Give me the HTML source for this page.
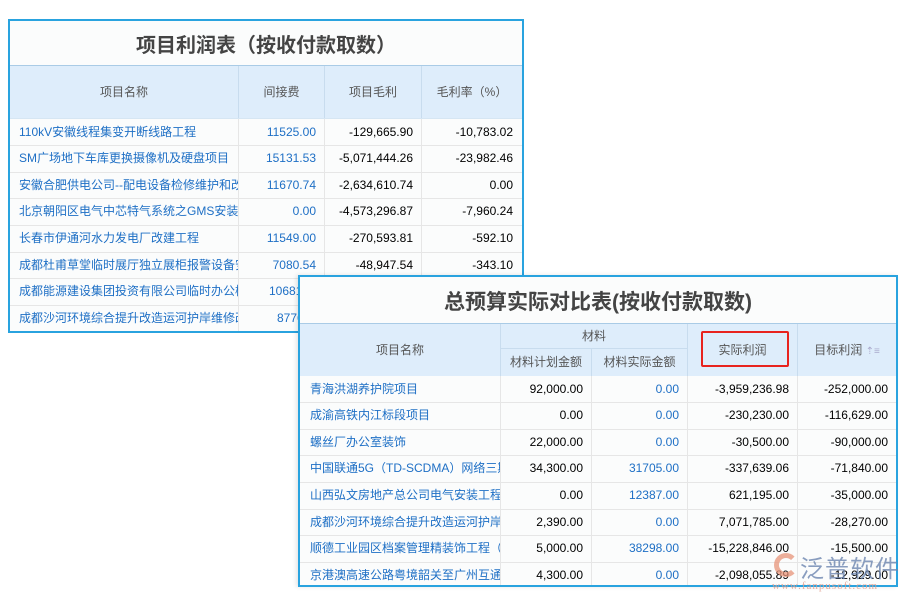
<!DOCTYPE html>
<html><head><meta charset="utf-8"><style>
*{margin:0;padding:0;box-sizing:border-box}
body{width:900px;height:600px;background:#fff;position:relative;overflow:hidden;font-family:"Liberation Sans","Noto Sans CJK SC",sans-serif;}
.t{position:absolute;background:#fbfcfc;border:2px solid #29a3df;overflow:hidden}
.ttl{position:absolute;left:0;right:0;text-align:center;font-weight:bold;color:#444;}
.c{position:absolute;font-size:12px;white-space:nowrap;overflow:hidden;line-height:26px}
.h{position:absolute;background:#deedfb;color:#555;font-size:12px;text-align:center;border-right:1px solid #c8dcee}
.l{color:#1e6fc5}
.r{text-align:right;padding-right:8px}
.hl{position:absolute;height:1px;background:#e6e6e6}
.vl{position:absolute;width:1px;background:#e6e6e6}
</style></head><body>

<div class="t" style="left:8px;top:19px;width:516px;height:314px">
<div class="ttl" style="top:8px;font-size:20px">项目利润表（按收付款取数）</div>
<div style="position:absolute;left:0;top:44px;width:512px;height:54px;background:#deedfb;border-top:1px solid #a9cbe6;border-bottom:1px solid #d6e6f3"></div>
<div class="h" style="left:0;top:45px;width:229px;height:52px;line-height:52px">项目名称</div>
<div class="h" style="left:229px;top:45px;width:86px;height:52px;line-height:52px">间接费</div>
<div class="h" style="left:315px;top:45px;width:97px;height:52px;line-height:52px">项目毛利</div>
<div class="h" style="left:412px;top:45px;width:100px;height:52px;line-height:52px;border:none">毛利率（%）</div>
<div class="vl" style="left:228px;top:98px;height:220px"></div>
<div class="vl" style="left:314px;top:98px;height:220px"></div>
<div class="vl" style="left:411px;top:98px;height:220px"></div>
<div class="hl" style="left:0;width:512px;top:124px"></div>
<div class="hl" style="left:0;width:512px;top:151px"></div>
<div class="hl" style="left:0;width:512px;top:177px"></div>
<div class="hl" style="left:0;width:512px;top:204px"></div>
<div class="hl" style="left:0;width:512px;top:231px"></div>
<div class="hl" style="left:0;width:512px;top:257px"></div>
<div class="hl" style="left:0;width:512px;top:284px"></div>

<div class="c l" style="left:9px;top:98px;width:219px">110kV安徽线程集变开断线路工程</div>
<div class="c l" style="left:9px;top:124px;width:219px">SM广场地下车库更换摄像机及硬盘项目</div>
<div class="c l" style="left:9px;top:151px;width:219px">安徽合肥供电公司--配电设备检修维护和改造</div>
<div class="c l" style="left:9px;top:177px;width:219px">北京朝阳区电气中芯特气系统之GMS安装工程</div>
<div class="c l" style="left:9px;top:204px;width:219px">长春市伊通河水力发电厂改建工程</div>
<div class="c l" style="left:9px;top:231px;width:219px">成都杜甫草堂临时展厅独立展柜报警设备安装</div>
<div class="c l" style="left:9px;top:257px;width:219px">成都能源建设集团投资有限公司临时办公楼</div>
<div class="c l" style="left:9px;top:284px;width:219px">成都沙河环境综合提升改造运河护岸维修改造</div>

<div class="c l r" style="left:228px;top:98px;width:86px">11525.00</div>
<div class="c l r" style="left:228px;top:124px;width:86px">15131.53</div>
<div class="c l r" style="left:228px;top:151px;width:86px">11670.74</div>
<div class="c l r" style="left:228px;top:177px;width:86px">0.00</div>
<div class="c l r" style="left:228px;top:204px;width:86px">11549.00</div>
<div class="c l r" style="left:228px;top:231px;width:86px">7080.54</div>
<div class="c l" style="left:259px;top:257px;width:60px">10681.00</div>
<div class="c l" style="left:267px;top:284px;width:60px">8776.00</div>

<div class="c r" style="left:314px;top:98px;width:97px">-129,665.90</div>
<div class="c r" style="left:314px;top:124px;width:97px">-5,071,444.26</div>
<div class="c r" style="left:314px;top:151px;width:97px">-2,634,610.74</div>
<div class="c r" style="left:314px;top:177px;width:97px">-4,573,296.87</div>
<div class="c r" style="left:314px;top:204px;width:97px">-270,593.81</div>
<div class="c r" style="left:314px;top:231px;width:97px">-48,947.54</div>
<div class="c r" style="left:411px;top:98px;width:100px">-10,783.02</div>
<div class="c r" style="left:411px;top:124px;width:100px">-23,982.46</div>
<div class="c r" style="left:411px;top:151px;width:100px">0.00</div>
<div class="c r" style="left:411px;top:177px;width:100px">-7,960.24</div>
<div class="c r" style="left:411px;top:204px;width:100px">-592.10</div>
<div class="c r" style="left:411px;top:231px;width:100px">-343.10</div>
</div>

<div class="t" style="left:298px;top:275px;width:600px;height:312px;box-shadow:-2px 0 4px rgba(0,0,0,.1)">
<div class="ttl" style="top:9px;font-size:21px">总预算实际对比表(按收付款取数)</div>
<div style="position:absolute;left:0;top:46px;width:596px;height:53px;background:#deedfb;border-top:1px solid #a9cbe6"></div>
<div class="h" style="left:0;top:47px;width:201px;height:52px;line-height:52px">项目名称</div>
<div class="h" style="left:201px;top:47px;width:187px;height:25px;line-height:25px;border-bottom:1px solid #c8dcee">材料</div>
<div class="h" style="left:201px;top:72px;width:91px;height:27px;line-height:27px">材料计划金额</div>
<div class="h" style="left:292px;top:72px;width:96px;height:27px;line-height:27px">材料实际金额</div>
<div class="h" style="left:388px;top:47px;width:110px;height:52px;line-height:52px">实际利润</div>
<div class="h" style="left:498px;top:47px;width:98px;height:52px;line-height:52px;border:none">目标利润 <span style="color:#aac;font-size:10px">⇡≡</span></div>
<div style="position:absolute;left:401px;top:54px;width:88px;height:36px;border:2px solid #e8231e;border-radius:2px"></div>
<div class="vl" style="left:200px;top:99px;height:220px"></div>
<div class="vl" style="left:291px;top:99px;height:220px"></div>
<div class="vl" style="left:387px;top:99px;height:220px"></div>
<div class="vl" style="left:497px;top:99px;height:220px"></div>
<div class="hl" style="left:0;width:596px;top:125px"></div>
<div class="hl" style="left:0;width:596px;top:152px"></div>
<div class="hl" style="left:0;width:596px;top:178px"></div>
<div class="hl" style="left:0;width:596px;top:205px"></div>
<div class="hl" style="left:0;width:596px;top:232px"></div>
<div class="hl" style="left:0;width:596px;top:258px"></div>
<div class="hl" style="left:0;width:596px;top:285px"></div>

<div class="c l" style="left:10px;top:99px;width:190px">青海洪湖养护院项目</div>
<div class="c l" style="left:10px;top:125px;width:190px">成渝高铁内江标段项目</div>
<div class="c l" style="left:10px;top:152px;width:190px">螺丝厂办公室装饰</div>
<div class="c l" style="left:10px;top:178px;width:190px">中国联通5G（TD-SCDMA）网络三期</div>
<div class="c l" style="left:10px;top:205px;width:190px">山西弘文房地产总公司电气安装工程</div>
<div class="c l" style="left:10px;top:232px;width:190px">成都沙河环境综合提升改造运河护岸</div>
<div class="c l" style="left:10px;top:258px;width:190px">顺德工业园区档案管理精装饰工程（</div>
<div class="c l" style="left:10px;top:285px;width:190px">京港澳高速公路粤境韶关至广州互通</div>

<div class="c r" style="left:200px;top:99px;width:91px">92,000.00</div>
<div class="c r" style="left:200px;top:125px;width:91px">0.00</div>
<div class="c r" style="left:200px;top:152px;width:91px">22,000.00</div>
<div class="c r" style="left:200px;top:178px;width:91px">34,300.00</div>
<div class="c r" style="left:200px;top:205px;width:91px">0.00</div>
<div class="c r" style="left:200px;top:232px;width:91px">2,390.00</div>
<div class="c r" style="left:200px;top:258px;width:91px">5,000.00</div>
<div class="c r" style="left:200px;top:285px;width:91px">4,300.00</div>

<div class="c l r" style="left:291px;top:99px;width:96px">0.00</div>
<div class="c l r" style="left:291px;top:125px;width:96px">0.00</div>
<div class="c l r" style="left:291px;top:152px;width:96px">0.00</div>
<div class="c l r" style="left:291px;top:178px;width:96px">31705.00</div>
<div class="c l r" style="left:291px;top:205px;width:96px">12387.00</div>
<div class="c l r" style="left:291px;top:232px;width:96px">0.00</div>
<div class="c l r" style="left:291px;top:258px;width:96px">38298.00</div>
<div class="c l r" style="left:291px;top:285px;width:96px">0.00</div>

<div class="c r" style="left:387px;top:99px;width:110px">-3,959,236.98</div>
<div class="c r" style="left:387px;top:125px;width:110px">-230,230.00</div>
<div class="c r" style="left:387px;top:152px;width:110px">-30,500.00</div>
<div class="c r" style="left:387px;top:178px;width:110px">-337,639.06</div>
<div class="c r" style="left:387px;top:205px;width:110px">621,195.00</div>
<div class="c r" style="left:387px;top:232px;width:110px">7,071,785.00</div>
<div class="c r" style="left:387px;top:258px;width:110px">-15,228,846.00</div>
<div class="c r" style="left:387px;top:285px;width:110px">-2,098,055.89</div>

<div class="c r" style="left:497px;top:99px;width:99px">-252,000.00</div>
<div class="c r" style="left:497px;top:125px;width:99px">-116,629.00</div>
<div class="c r" style="left:497px;top:152px;width:99px">-90,000.00</div>
<div class="c r" style="left:497px;top:178px;width:99px">-71,840.00</div>
<div class="c r" style="left:497px;top:205px;width:99px">-35,000.00</div>
<div class="c r" style="left:497px;top:232px;width:99px">-28,270.00</div>
<div class="c r" style="left:497px;top:258px;width:99px">-15,500.00</div>
<div class="c r" style="left:497px;top:285px;width:99px">-12,929.00</div>
</div>

<div style="position:absolute;left:774px;top:553px;width:24px;height:24px;border-radius:50%;border:5px solid #e8957a;border-right-color:transparent;opacity:.75"></div>
<div style="position:absolute;left:800px;top:549px;font-size:24px;color:#6d86b0;opacity:.8;letter-spacing:1px">泛普软件</div>
<div style="position:absolute;left:772px;top:580px;font-size:11px;color:#e0a090;font-family:'Liberation Serif',serif;letter-spacing:1px;opacity:.85">www.fanpusoft.com</div>
</body></html>
